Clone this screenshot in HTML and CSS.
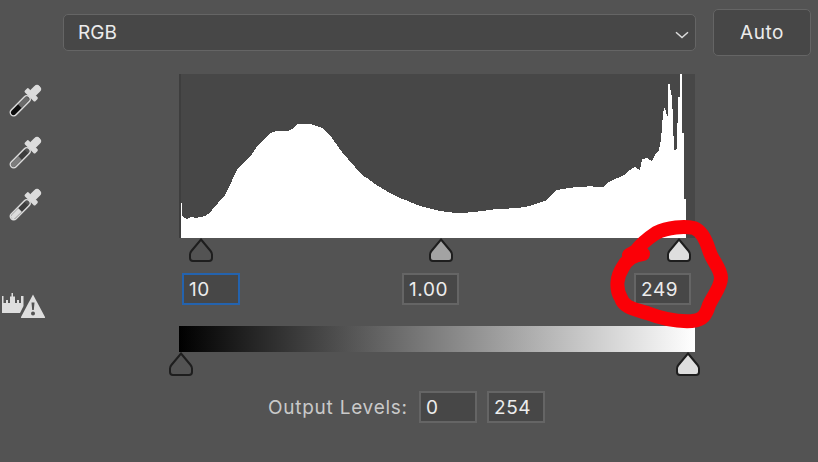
FILE: index.html
```html
<!DOCTYPE html>
<html lang="en">
<head>
<meta charset="utf-8">
<title>Levels</title>
<link rel="stylesheet" href="styles.css">
</head>
<body>
<svg class="defs" width="0" height="0">
  <symbol id="handle" viewBox="0 0 24 24"><path d="M12 1.5 21.6 13Q23 14.7 23 16.5V20Q23 23 20 23H4Q1 23 1 20V16.5Q1 14.7 2.4 13Z"/></symbol>
  <symbol id="dropper" viewBox="0 0 32 42">
    <rect class="dl" x="12" y="0" width="8" height="13" rx="4"/>
    <rect class="dl" x="8.5" y="9.5" width="15" height="5.5" rx="1.5"/>
  </symbol>
</svg>
<main class="panel">
  <div class="top">
    <div class="select"><span>RGB</span>
      <svg class="chev" viewBox="0 0 14 8"><path d="M1 1.2 7 6.6 13 1.2"/></svg>
    </div>
    <button class="auto">Auto</button>
  </div>
  <div class="body">
    <aside class="tools">
      <svg class="dropper" viewBox="0 0 32 32"><g transform="rotate(45 16 16)">
        <use href="#dropper" x="0" y="-5" width="32" height="42"/>
        <rect class="tube" x="12.6" y="10" width="6.8" height="25.4" rx="3.4"/>
        <path class="fill-mid" d="M13.6 12h4.800v11h-4.800z"/>
        <path class="fill-black" d="M13.6 23.500h4.800v9a2.400 2.400 0 0 1-4.800 0z"/>
      </g></svg>
      <svg class="dropper" viewBox="0 0 32 32"><g transform="rotate(45 16 16)">
        <use href="#dropper" x="0" y="-5" width="32" height="42"/>
        <rect class="tube" x="12.6" y="10" width="6.8" height="25.4" rx="3.4"/>
        <path class="fill-dark" d="M13.6 14h4.800v9h-4.800z"/>
        <path class="fill-gray" d="M13.6 23h4.800v9.500a2.400 2.400 0 0 1-4.800 0z"/>
      </g></svg>
      <svg class="dropper" viewBox="0 0 32 32"><g transform="rotate(45 16 16)">
        <use href="#dropper" x="0" y="-5" width="32" height="42"/>
        <rect class="tube" x="12.6" y="10" width="6.8" height="25.4" rx="3.4"/>
        <path class="fill-dark" d="M13.6 14h4.800v9h-4.800z"/>
        <path class="fill-white" d="M13.6 23h4.800v9.500a2.400 2.400 0 0 1-4.800 0z"/>
      </g></svg>
      <svg class="warn" viewBox="0 0 44 25">
        <path class="wi" d="M0 3H1.500V10H4V7H6V10H8V3.500H9.500V0H11V3.500H13V10H15V7H17V10H19V3H21.500V13L18 20H0Z"/>
        <path class="wi" d="M31 1.500 43 24Q43.300 25 42.600 25H19.400Q18.700 25 19 24Z"/>
        <path class="wd" d="M29.500 9.500h3l-.7 7.500h-1.600zM31 18.500a2 2 0 1 1 0 4 2 2 0 0 1 0-4z"/>
      </svg>
    </aside>
    <section class="main">
      <svg class="hist" viewBox="179 74 516 164" shape-rendering="crispEdges">
        <rect class="hist-l" x="179" y="74" width="2" height="164"/>
        <polygon class="hist-w" points="181,238 181,203 182,203 182,216 184,218 187,219 191,217 196,218 205,216 208,214 212,210 218,203 225,195 230,185 234,176 238,168 244,162 250,157 254,151 258,145 264,139 270,133 276,131 288,131 292,129 297,124.500 303,124 312,124.500 322,128 327,132 332,138 337,145 342,152 348,159 355,167 362,175 367,178 375,184 383,189 392,194 400,198 408,201 417,205 428,208 440,211 452,212.500 463,213 473,212 483,211 493,209.500 503,209 516,208 525,207 533,205 541,202 547,200 550,196 553,193 557,190 562,189 570,188 576,187 584,187 590,186 596,187 603,187 607,183 613,180 620,177 624,175 630,170 635,167 638,169 640,170 642,159 647,158 652,161 655,155 659,150 661,140 663,113 665,106 666,113 668,117 668,84 670,84 671,95 672,95 673,122 674,150 677,149 678,97 680,97 680,74 682,74 682,133 684,133 684,199 686,199 686,238"/>
      </svg>
      <div class="track">
        <svg class="handle h-black in-a"><use href="#handle"/></svg>
        <svg class="handle h-gray in-b"><use href="#handle"/></svg>
        <svg class="handle h-white in-c"><use href="#handle"/></svg>
      </div>
      <div class="inputs">
        <div class="field focus">10</div>
        <div class="field mid">1.00</div>
        <div class="field last">249</div>
      </div>
      <div class="gradient"></div>
      <div class="track out">
        <svg class="handle h-black out-a"><use href="#handle"/></svg>
        <svg class="handle h-white out-b"><use href="#handle"/></svg>
      </div>
      <div class="output">
        <span class="label">Output Levels:</span>
        <div class="field wide">0</div>
        <div class="field wide">254</div>
      </div>
    </section>
  </div>
</main>
<svg class="scribble" viewBox="0 0 818 462">
  <path d="M629 255 636 251C640 245 647 239 656 233 668 227 684 226 694 228 702 231 706 240 709 250 712 261 721 268 721 278 721 287 713 296 709 305 706 315 703 320 692 321 675 322 660 318 647 313 635 309 624 308 621 298 615 288 617 276 623 267 626 261 633 255 643 254"/>
</svg>
</body>
</html>
```
FILE: styles.css
```css
* { box-sizing: border-box; }
html, body { margin: 0; padding: 0; }
body {
  width: 818px;
  height: 462px;
  overflow: hidden;
  position: relative;
  background: #535353;
  font-family: Inter, "Liberation Sans", sans-serif;
  color: #ececec;
}
.defs { position: absolute; }
.panel { display: flex; flex-direction: column; padding-top: 9px; }
.top { display: flex; align-items: center; gap: 17px; padding-left: 63px; }
.select {
  width: 633px;
  height: 37px;
  display: flex;
  align-items: center;
  justify-content: space-between;
  padding: 0 6px 0 14px;
  background: #474747;
  border: 1.500px solid #656565;
  border-radius: 5px;
  font-size: 19px;
}
.chev { width: 14px; height: 8px; margin-top: 5px; fill: none; stroke: #dcdcdc; stroke-width: 1.500; }
.auto {
  width: 98px;
  height: 47px;
  padding: 0;
  background: #474747;
  border: 1.500px solid #656565;
  border-radius: 5px;
  color: #ececec;
  font: inherit;
  font-size: 19px;
  letter-spacing: 0.5px;
}
.body { display: flex; margin-top: 18px; }
.tools { width: 179px; display: flex; flex-direction: column; padding: 11px 0 0 9px; }
.dropper { width: 32px; height: 32px; margin-bottom: 20px; display: block; overflow: visible; }
.dl { fill: #dcdcdc; }
.tube { fill: #535353; stroke: #dcdcdc; stroke-width: 1.500; }
.fill-mid { fill: #6a6a6a; }
.fill-dark { fill: #3d3d3d; }
.fill-black { fill: #0c0c0c; }
.fill-gray { fill: #7d7d7d; }
.fill-white { fill: #dcdcdc; }
.warn { width: 44px; height: 25px; margin: 52px 0 0 -7px; display: block; flex: none; }
.wi { fill: #dedede; }
.wd { fill: #535353; }
.main { width: 516px; display: flex; flex-direction: column; }
.hist { width: 516px; height: 164px; display: block; background: #474747; }
.hist-l { fill: #3e3e3e; }
.hist-w { fill: #fff; }
.track { position: relative; height: 24px; flex: none; }
.handle { position: absolute; top: 0; width: 24px; height: 24px; stroke: #1e1e1e; stroke-width: 2; fill: none; }
.h-black { fill: #535353; }
.h-gray { fill: #a3a3a3; }
.h-white { fill: #dedede; }
.in-a { left: 10px; }
.in-b { left: 250px; }
.in-c { left: 488px; }
.out-a { left: -10px; }
.out-b { left: 497px; }
.inputs { display: flex; margin-top: 11px; padding-left: 3px; }
.field {
  width: 57px;
  height: 32px;
  display: flex;
  align-items: center;
  padding-left: 5px;
  background: #474747;
  border: 2px solid #656565;
  font-size: 19px;
  letter-spacing: 0.6px;
  flex: none;
}
.focus { width: 58px; border-color: #2463ae; }
.mid { margin-left: 162px; }
.last { margin-left: 175px; }
.gradient {
  height: 26px;
  margin-top: 21px;
  flex: none;
  background: linear-gradient(to right, #000, #fff);
}
.output { display: flex; align-items: center; gap: 10px; margin-top: 15px; padding-left: 89px; }
.output .wide { width: 58px; }
.label { width: 141px; color: #c9c9c9; font-size: 19px; letter-spacing: 0.75px; white-space: nowrap; }
.scribble { position: absolute; inset: 0; width: 818px; height: 462px; fill: none; stroke: #fb0007; stroke-width: 14; stroke-linecap: round; stroke-linejoin: round; pointer-events: none; }
```
